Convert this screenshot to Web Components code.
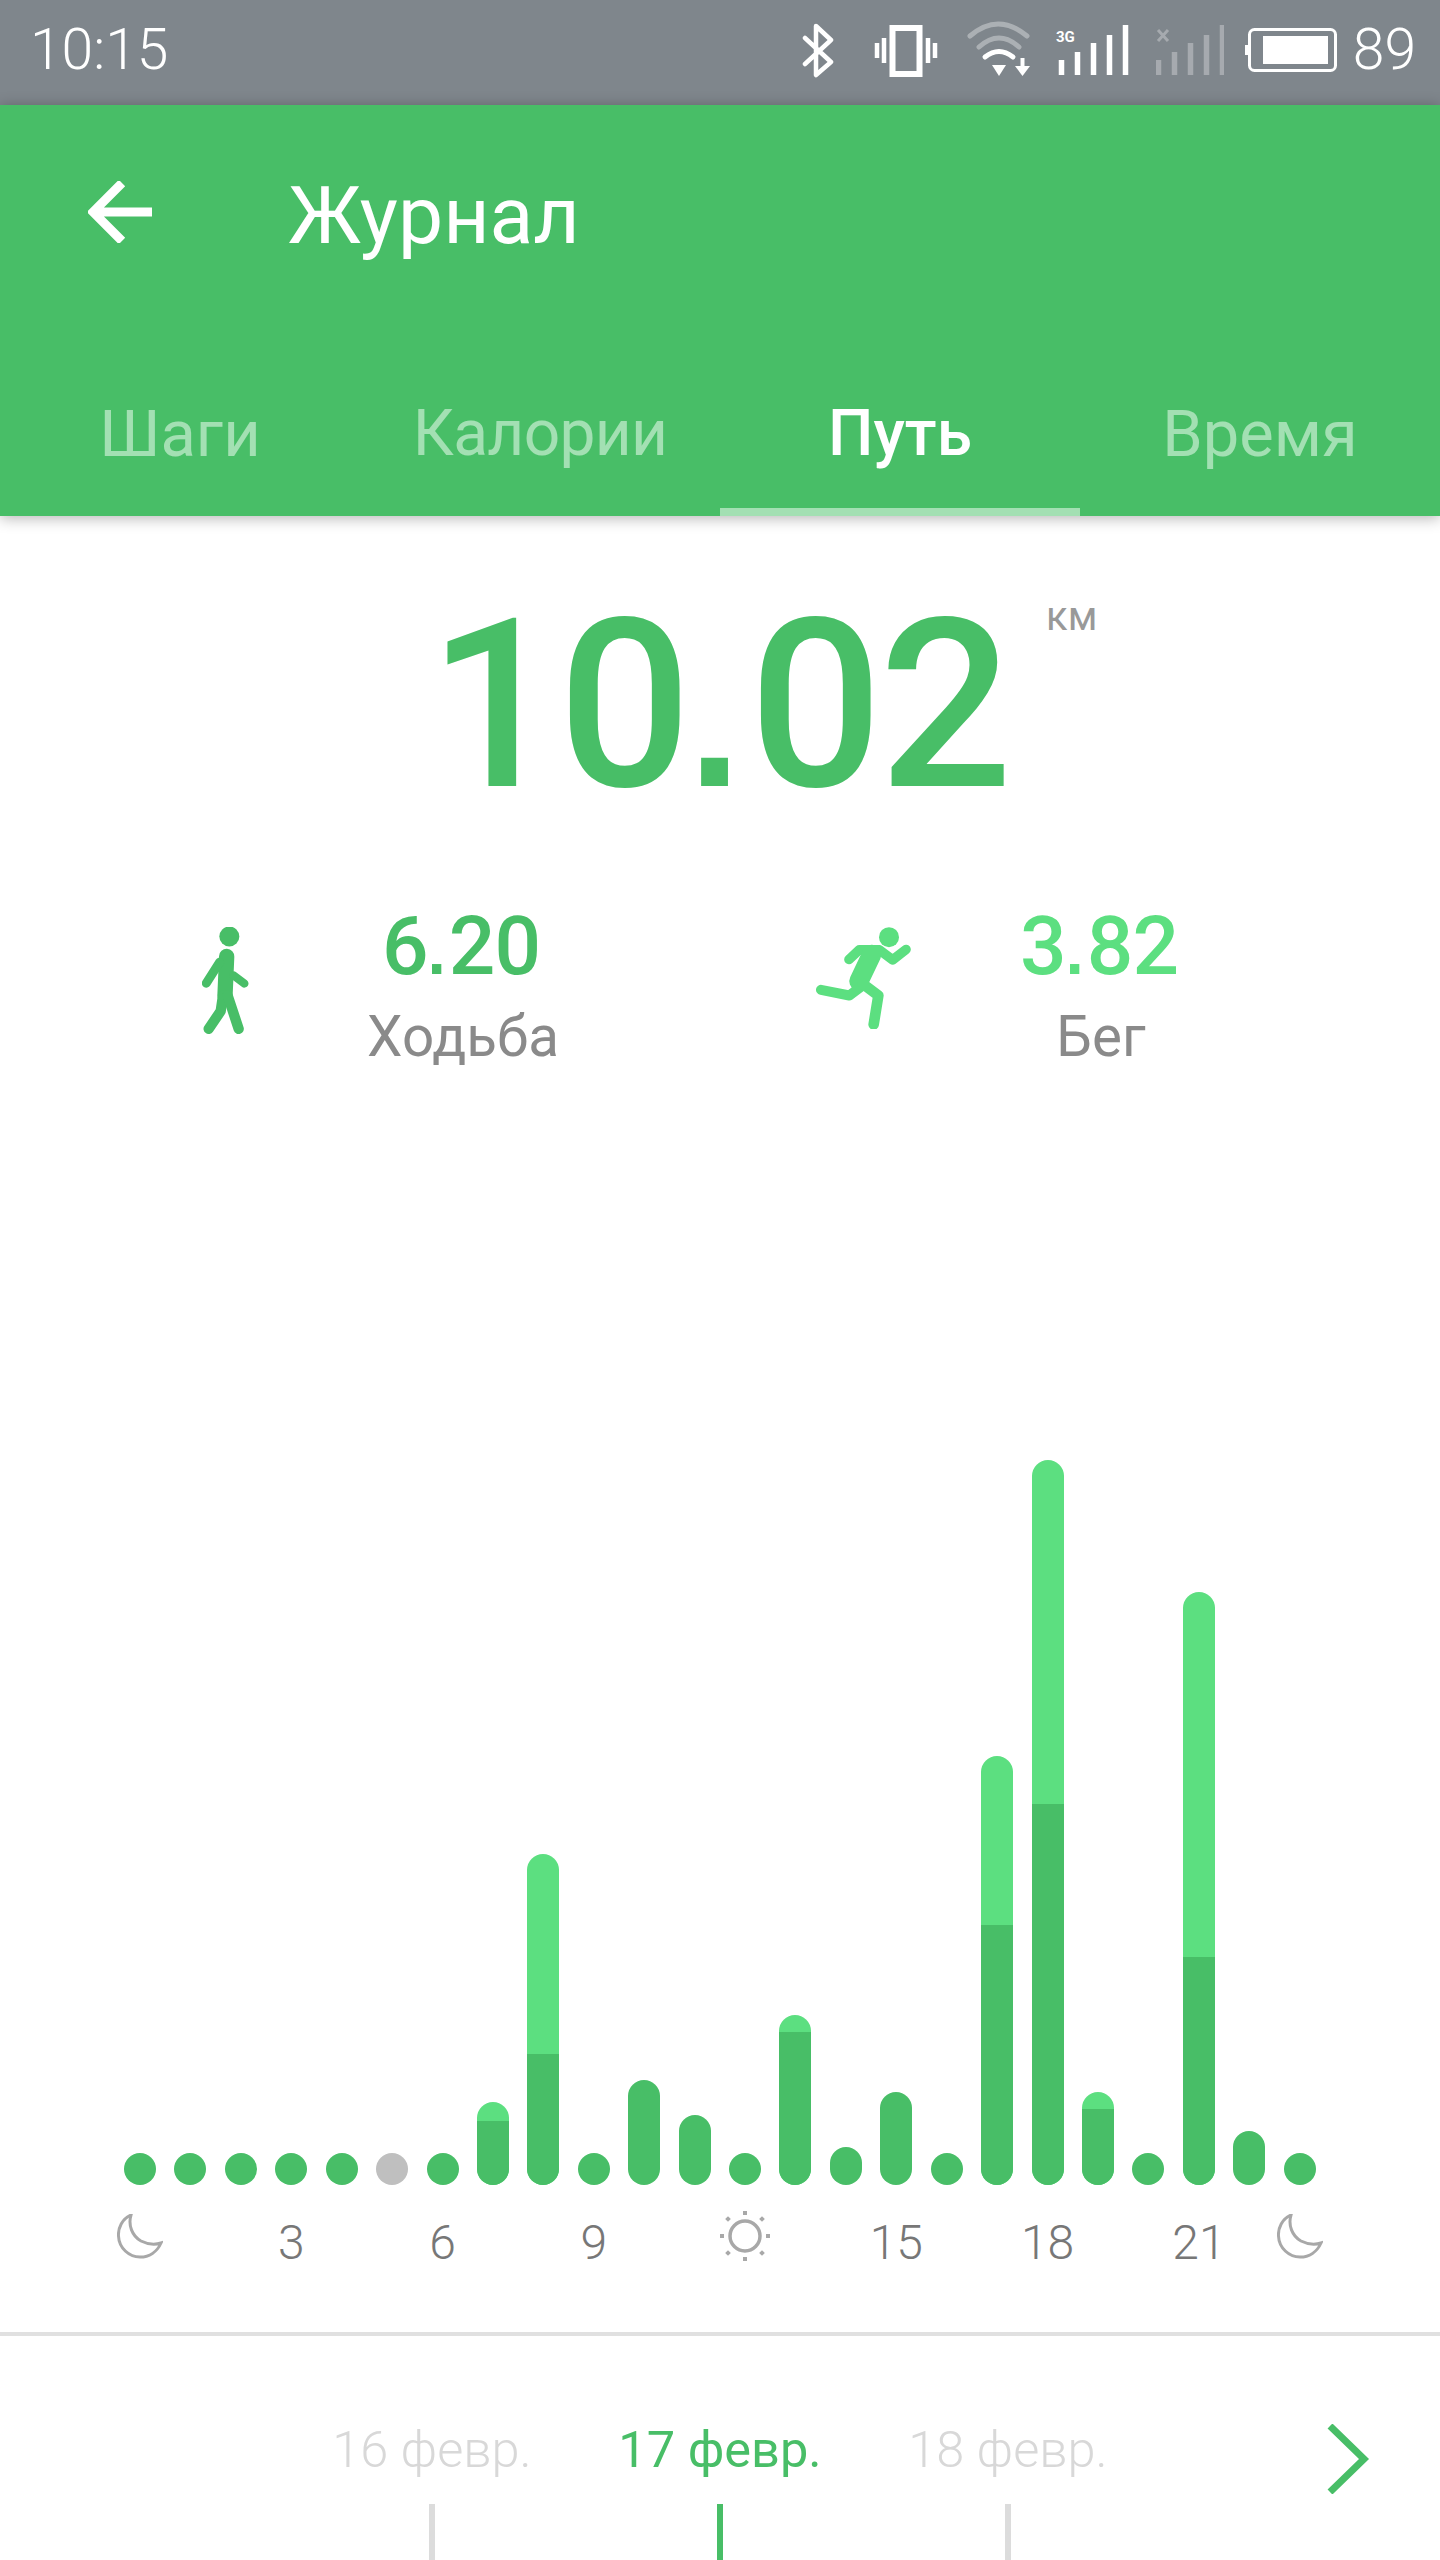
<!DOCTYPE html>
<html lang="ru">
<head>
<meta charset="utf-8">
<title>Журнал</title>
<style>
html, body { margin: 0; padding: 0; background: #fff; }
body { width: 1440px; height: 2560px; overflow: hidden; font-family: Roboto, "Noto Sans", sans-serif; }
</style>
</head>
<body>
<app-status-bar></app-status-bar>
<app-header title="Журнал">
  <tab-item>Шаги</tab-item>
  <tab-item style="font-size:64px;letter-spacing:-.7px">Калории</tab-item>
  <tab-item active>Путь</tab-item>
  <tab-item>Время</tab-item>
</app-header>
<distance-hero value="10.02" unit="км"></distance-hero>
<stat-row></stat-row>
<hourly-chart></hourly-chart>
<date-strip></date-strip>

<script>
// the period of the reference is square, Roboto's is round
function squareDot(value) {
  return value.replace('.', '<span class="dot">.</span>');
}

customElements.define('app-status-bar', class extends HTMLElement {
  constructor() {
    super();
    this.attachShadow({ mode: 'open' });
    this.shadowRoot.innerHTML = `
<style>
:host { display: flex; align-items: flex-start; height: 105px; background: #7f868c; color: #fff; }
.time { margin: 21px 0 0 30px; font-size: 57px; line-height: 57px; font-weight: 300; }
.icons { display: flex; margin-left: auto; }
svg { display: block; height: 105px; fill: none; stroke: #fff; }
.battery-level { margin: 21px 24px 0 16px; font-size: 57px; line-height: 57px; font-weight: 300; }
text { font: 700 15px Roboto, sans-serif; fill: #fff; stroke: none; }
</style>
<span class="time">10:15</span>
<div class="icons">
  <svg width="32" viewBox="0 0 32 105" stroke-width="4.5" stroke-linejoin="round" stroke-linecap="round">
    <path d="M3 38 L29 62 L14 75 V26 L29 40 L3 64"/>
  </svg>
  <svg width="64" viewBox="0 0 64 105" style="margin-left:40px">
    <rect x="18.5" y="28" width="27" height="46" stroke-width="6"/>
    <path d="M3 43 V58 M10 38 V63 M54 38 V63 M61 43 V58" stroke-width="4.5"/>
  </svg>
  <svg width="64" viewBox="0 0 64 105" style="margin-left:29px" stroke-linecap="round">
    <path d="M3 36 Q 31 12 60 36" stroke-width="5" opacity=".35"/>
    <path d="M12 47 Q 32 29 52 47" stroke-width="5" opacity=".35"/>
    <path d="M18 57 Q 32 46 46 57" stroke-width="5"/>
    <path d="M25 65 H39 L32 76 Z" fill="#fff" stroke="none"/>
    <path d="M55.5 58 V70" stroke-width="4" stroke-linecap="butt"/>
    <path d="M48 66 H63 L55.5 76 Z" fill="#fff" stroke="none"/>
  </svg>
  <svg width="73" viewBox="0 0 73 105" style="margin-left:25px" stroke-width="5.5">
    <text x="0" y="42">3G</text>
    <path d="M5.5 60 V75 M21.5 52 V75 M37.5 43 V75 M53.5 35 V75 M69.5 25 V75"/>
  </svg>
  <svg width="68" viewBox="0 0 68 105" style="margin-left:27px" stroke-width="5.5" opacity=".3">
    <path d="M2 30 L12 41 M12 30 L2 41" stroke-width="3"/>
    <path d="M2.5 60 V75 M18.5 52 V75 M34.5 43 V75 M50.5 35 V75 M66.5 25 V75"/>
  </svg>
  <svg width="92" viewBox="0 0 92 105" style="margin-left:21px">
    <rect x="4.5" y="29.5" width="86" height="41" rx="5" stroke-width="3"/>
    <rect x="0" y="45" width="3" height="10" fill="#fff" stroke="none"/>
    <rect x="18" y="36" width="65" height="28" fill="#fff" stroke="none"/>
  </svg>
</div>
<span class="battery-level">89</span>
`;
  }
});

customElements.define('tab-item', class extends HTMLElement {
  constructor() {
    super();
    this.attachShadow({ mode: 'open' });
    this.shadowRoot.innerHTML = `
<style>
:host { display: block; box-sizing: border-box; height: 144px; padding-top: 30px; text-align: center;
  font-size: 65px; line-height: 64px; color: #a3e0b3; }
:host([active]) { color: #fff; font-size: 64px; font-weight: 500; box-shadow: inset 0 -8px 0 #a3e0b3; }
</style>
<slot></slot>
`;
  }
});

customElements.define('app-header', class extends HTMLElement {
  constructor() {
    super();
    this.attachShadow({ mode: 'open' });
    this.shadowRoot.innerHTML = `
<style>
:host { display: block; height: 411px; background: #48be67; color: #fff; box-shadow: 0 2px 14px rgba(0,0,0,.3); position: relative; }
.toolbar { display: flex; align-items: flex-start; box-sizing: border-box; height: 267px; padding: 71px 0 0 88px; }
svg { display: block; margin-top: 5px; fill: none; stroke: #fff; stroke-width: 9; }
h1 { margin: 0 0 0 136px; font-size: 80.5px; line-height: 80px; font-weight: 400; }
.tabs { display: grid; grid-template-columns: repeat(4, 360px); }
</style>
<div class="toolbar">
  <svg width="64" height="62" viewBox="0 0 64 62">
    <path d="M64 31 H6 M34 2 L5 31 L34 60"/>
  </svg>
  <h1></h1>
</div>
<div class="tabs"><slot></slot></div>
`;
    this.shadowRoot.querySelector('h1').textContent = this.getAttribute('title');
  }
});

customElements.define('distance-hero', class extends HTMLElement {
  constructor() {
    super();
    this.attachShadow({ mode: 'open' });
    this.shadowRoot.innerHTML = `
<style>
:host { display: flex; align-items: flex-start; padding: 72px 0 0 428px; height: 235px; color: #48be67; }
.value { font-size: 235px; line-height: 235px; font-weight: 500; letter-spacing: -3.5px; }
.dot { font-family: "Liberation Sans", sans-serif; font-weight: 700; font-size: 190px; line-height: 0; letter-spacing: 8px; }
.unit { margin: 9px 0 0 37px; font-size: 40px; line-height: 40px; color: #999; }
</style>
<span class="value"></span><span class="unit"></span>
`;
    this.shadowRoot.querySelector('.value').innerHTML = squareDot(this.getAttribute('value'));
    this.shadowRoot.querySelector('.unit').textContent = this.getAttribute('unit');
  }
});

customElements.define('stat-item', class extends HTMLElement {
  constructor() {
    super();
    this.attachShadow({ mode: 'open' });
    this.shadowRoot.innerHTML = `
<style>
:host { display: flex; align-items: flex-start; }
.icon { flex: none; margin-top: 22px; }
.text { width: 200px; text-align: center; }
.value { margin-left: -4px; font-size: 82px; line-height: 82px; font-weight: 500; letter-spacing: -1px; color: var(--stat-color); }
.dot { font-family: "Liberation Sans", sans-serif; font-weight: 700; font-size: 66px; line-height: 0; letter-spacing: 3px; }
.label { margin-top: 23px; font-size: 56.5px; line-height: 55px; color: #8a8a8a; }
</style>
<div class="icon"><slot name="icon"></slot></div>
<div class="text">
  <div class="value"></div>
  <div class="label"></div>
</div>
`;
    this.shadowRoot.querySelector('.value').innerHTML = squareDot(this.getAttribute('value'));
    this.shadowRoot.querySelector('.label').textContent = this.getAttribute('label');
  }
});

customElements.define('stat-row', class extends HTMLElement {
  constructor() {
    super();
    this.attachShadow({ mode: 'open' });
    this.shadowRoot.innerHTML = `
<style>
:host { display: flex; padding: 82px 0 0 202px; }
svg { display: block; fill: none; stroke-linecap: round; stroke-linejoin: round; }
</style>
<stat-item value="6.20" label="Ходьба" style="--stat-color:#48be67">
  <svg slot="icon" width="47" height="107" viewBox="155 140 141 320" stroke="#48be67" style="margin-right:114px">
    <circle cx="237" cy="168" r="30" fill="#48be67" stroke="none"/>
    <path d="M229 228 L224 345" stroke-width="46"/>
    <path d="M208 245 L168 308" stroke-width="27"/>
    <path d="M250 285 L282 309" stroke-width="25"/>
    <path d="M218 345 L211 392 L175 445" stroke-width="31"/>
    <path d="M232 345 L265 445" stroke-width="31"/>
  </svg>
</stat-item>
<stat-item value="3.82" label="Бег" style="--stat-color:#5cdf80;margin-left:253px">
  <svg slot="icon" width="95" height="102" viewBox="105 150 285 305" stroke="#5cdf80" style="margin-right:90px">
    <circle cx="324" cy="180" r="30" fill="#5cdf80" stroke="none"/>
    <path d="M204 247 L235 218 L295 218 L335 248 L375 217" stroke-width="29"/>
    <path d="M272 232 L234 312" stroke-width="58"/>
    <path d="M238 330 L205 355 L120 338" stroke-width="30"/>
    <path d="M245 320 L292 355 L278 442" stroke-width="32"/>
  </svg>
</stat-item>
`;
  }
});

// [total height, height of the walking part] for every hour
const HOURS = [
  [32, 32], [32, 32], [32, 32], [32, 32], [32, 32], [32, 32, 'none'], [32, 32],
  [83, 64], [331, 131], [32, 32], [105, 105], [70, 70],
  [32, 32], [170, 153], [38, 38], [93, 93], [32, 32],
  [429, 260], [725, 381], [93, 76], [32, 32], [593, 228], [54, 54], [32, 32]
];

customElements.define('hourly-chart', class extends HTMLElement {
  constructor() {
    super();
    this.attachShadow({ mode: 'open' });
    let bars = HOURS.map(([total, walk, none]) => {
      if (none) return `<div class="bar"><div class="empty" style="height:${total}px"></div></div>`;
      return `<div class="bar" style="height:${total}px"><div class="walk" style="height:${walk}px"></div></div>`;
    }).join('');
    const moon = `<svg width="46" height="46" viewBox="0 0 46 46" style="margin-top:3px"><path d="M14 1 C5 5 1 14 1.5 22 C2 34 12 43 23 43 C32 43 40 38 44 29 C38 31 30 30 24 27 C15 22 11 11 14 1 Z" fill="none" stroke="#a8a8a8" stroke-width="3"/></svg>`;
    const sun = `<svg width="50" height="50" viewBox="0 0 50 50"><circle cx="25" cy="25" r="15" fill="none" stroke="#a8a8a8" stroke-width="3.5"/><g fill="#a8a8a8"><rect x="23" y="0" width="4" height="4"/><rect x="23" y="46" width="4" height="4"/><rect x="0" y="23" width="4" height="4"/><rect x="46" y="23" width="4" height="4"/><rect x="6" y="6" width="4" height="4" transform="rotate(45 8 8)"/><rect x="40" y="6" width="4" height="4" transform="rotate(45 42 8)"/><rect x="6" y="40" width="4" height="4" transform="rotate(45 8 42)"/><rect x="40" y="40" width="4" height="4" transform="rotate(45 42 42)"/></g></svg>`;
    const labels = { 0: moon, 3: '3', 6: '6', 9: '9', 12: sun, 15: '15', 18: '18', 21: '21', 23: moon };
    let axis = '';
    for (let i = 0; i < 24; i++) {
      axis += `<div class="tick">${labels[i] ? (labels[i].startsWith('<') ? labels[i] : `<span>${labels[i]}</span>`) : ''}</div>`;
    }
    this.shadowRoot.innerHTML = `
<style>
:host { display: block; padding: 375px 0 0 114.8px; }
.bars, .axis { display: grid; grid-template-columns: repeat(24, 50.43px); }
.bars { height: 745px; align-items: end; justify-items: center; }
.bar { width: 32px; border-radius: 16px; background: #5cdf80; overflow: hidden; display: flex; align-items: flex-end; }
.walk { flex: 1; background: #48be67; }
.empty { flex: 1; background: #bfbfbf; }
.axis { height: 147px; padding-top: 26px; box-sizing: border-box; }
.tick { display: flex; justify-content: center; white-space: nowrap; min-width: 0; }
svg { display: block; flex: none; }
span { margin-top: 8px; font-size: 48px; line-height: 48px; font-weight: 300; color: #777; }
</style>
<div class="bars">${bars}</div>
<div class="axis">${axis}</div>
`;
  }
});

customElements.define('date-strip', class extends HTMLElement {
  constructor() {
    super();
    this.attachShadow({ mode: 'open' });
    const days = [['16 февр.', false], ['17 февр.', true], ['18 февр.', false]];
    this.shadowRoot.innerHTML = `
<style>
:host { display: flex; align-items: flex-start; box-sizing: border-box; height: 228px;
  border-top: 4px solid #e0e0e0; padding: 89px 0 0 288px; overflow: hidden; }
.day { width: 288px; display: flex; flex-direction: column; align-items: center; font-size: 50.5px; line-height: 49px; font-weight: 300; color: #d8d8d8; white-space: nowrap; }
.day.on { color: #48be67; font-weight: 400; }
.day i { display: block; flex: none; width: 6px; height: 60px; margin-top: 30px; background: #dcdcdc; }
.day.on i { background: #48be67; }
svg { display: block; margin: -1px 0 0 174px; flex: none; }
</style>
${days.map(([t, on]) => `<div class="day${on ? ' on' : ''}">${t}<i></i></div>`).join('')}
<svg width="44" height="70" viewBox="0 0 44 70"><path d="M4 2 L38 35 L4 68" fill="none" stroke="#48be67" stroke-width="7"/></svg>
`;
  }
});
</script>
</body>
</html>
